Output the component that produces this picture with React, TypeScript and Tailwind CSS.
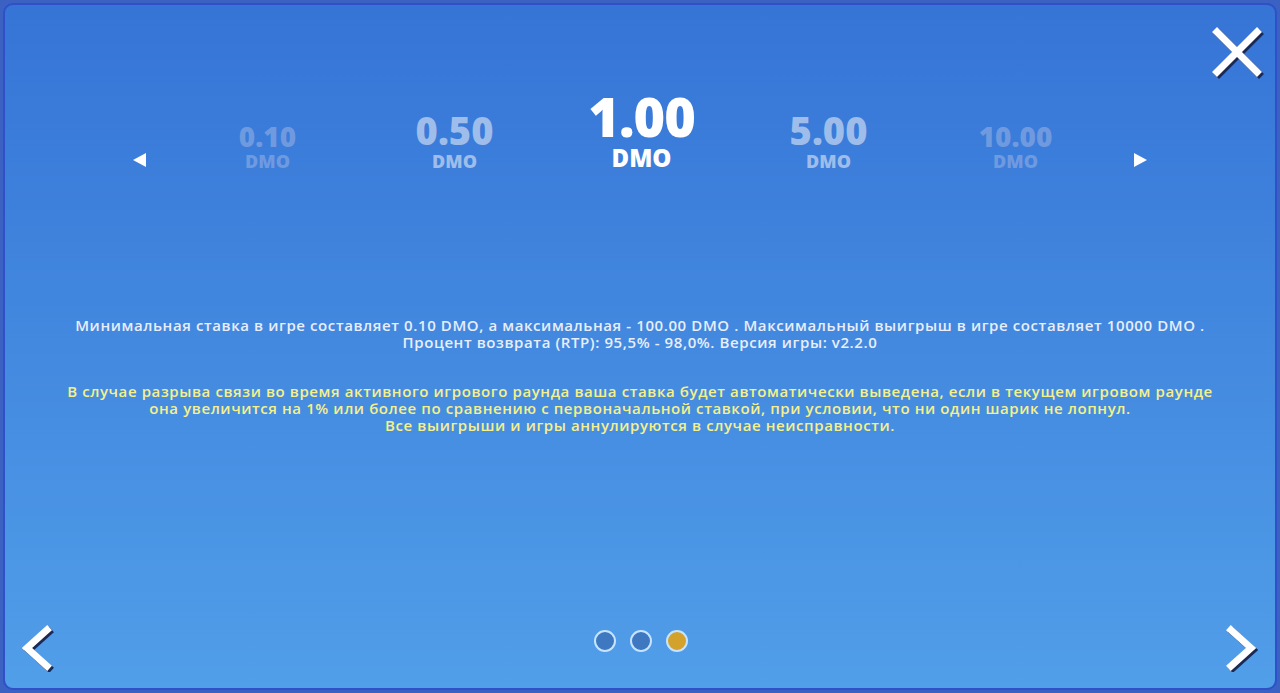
import { useState } from 'react'

const bets = ['0.10', '0.50', '1.00', '5.00', '10.00', '20.00', '50.00', '100.00']

function Chevron({ dir }: { dir: 'left' | 'right' }) {
  const d = dir === 'left' ? 'M30 6 L10 24 L30 42' : 'M10 6 L30 24 L10 42'
  return (
    <svg width="40" height="48" viewBox="0 0 40 48">
      <path d={d} transform="translate(2 2)" fill="none" stroke="#1b2a55" strokeWidth="7" strokeLinecap="square" />
      <path d={d} fill="none" stroke="#ffffff" strokeWidth="7" strokeLinecap="square" />
    </svg>
  )
}

function App() {
  const [active, setActive] = useState(2)
  const [page, setPage] = useState(2)

  const offsets = [-2, -1, 0, 1, 2]

  return (
    <div className="h-[693px] w-[1280px] overflow-hidden bg-[#3b62c3] p-[3px] font-['Open_Sans',sans-serif]">
      <div className="relative flex h-full flex-col rounded-[10px] border-2 border-[#2f50c6] bg-gradient-to-b from-[#3674d6] to-[#519ee9]">
        <button
          type="button"
          className="absolute right-[10px] top-[21px]"
          onClick={() => setPage(0)}
        >
          <svg width="54" height="54" viewBox="0 0 54 54">
            <g transform="translate(2 2)" stroke="#1b2a55" strokeWidth="7" strokeLinecap="square">
              <path d="M6 6 L46 46 M46 6 L6 46" />
            </g>
            <g stroke="#ffffff" strokeWidth="7" strokeLinecap="square">
              <path d="M6 6 L46 46 M46 6 L6 46" />
            </g>
          </svg>
        </button>

        <div className="mt-[84px] flex items-end justify-center">
          <button
            type="button"
            className="mb-[3px] mr-[28px] h-0 w-0 border-y-[7px] border-r-[13px] border-y-transparent border-r-white"
            onClick={() => setActive((a) => Math.max(0, a - 1))}
          />
          {offsets.map((o) => {
            const i = active + o
            const label = bets[i] ?? ''
            const dist = Math.abs(o)
            return (
              <div
                key={o}
                className={
                  'flex w-[187px] flex-col items-center font-extrabold leading-none ' +
                  (dist === 0
                    ? 'text-white'
                    : dist === 1
                      ? 'text-[#9ebdea]'
                      : 'text-[#6f9ae0]')
                }
              >
                <span
                  className={
                    dist === 0
                      ? 'text-[54px] tracking-[-1px]'
                      : dist === 1
                        ? 'text-[38px]'
                        : 'text-[28px]'
                  }
                >
                  {label}
                </span>
                <span
                  className={
                    dist === 0
                      ? 'mt-[3px] text-[24px]'
                      : dist === 1
                        ? 'mt-[3px] text-[18px]'
                        : 'mt-[2px] text-[18px]'
                  }
                >
                  {label ? 'DMO' : ''}
                </span>
              </div>
            )
          })}
          <button
            type="button"
            className="mb-[3px] ml-[25px] h-0 w-0 border-y-[7px] border-l-[13px] border-y-transparent border-l-white"
            onClick={() => setActive((a) => Math.min(bets.length - 1, a + 1))}
          />
        </div>

        <div className="mt-[147px] px-[40px] text-center text-[15px] font-semibold leading-[17px] tracking-[0.6px]">
          <p className="text-[#e8eef9]">
            Минимальная ставка в игре составляет 0.10 DMO, а максимальная - 100.00 DMO . Максимальный выигрыш в игре составляет 10000 DMO .
            <br />
            Процент возврата (RTP): 95,5% - 98,0%. Версия игры: v2.2.0
          </p>
          <p className="mt-[32px] text-[#f6f08a]">
            В случае разрыва связи во время активного игрового раунда ваша ставка будет автоматически выведена, если в текущем игровом раунде
            <br />
            она увеличится на 1% или более по сравнению с первоначальной ставкой, при условии, что ни один шарик не лопнул.
            <br />
            Все выигрыши и игры аннулируются в случае неисправности.
          </p>
        </div>

        <div className="mt-auto flex items-center justify-between pb-[16px] pl-[12px] pr-[14px]">
          <button type="button" onClick={() => setPage((p) => Math.max(0, p - 1))}>
            <Chevron dir="left" />
          </button>
          <div className="mb-[14px] ml-[4px] flex items-center gap-[14px]">
            {[0, 1, 2].map((i) => (
              <span
                key={i}
                className={
                  'h-[22px] w-[22px] rounded-full border-2 border-[#c6e4ff] ' +
                  (i === page ? 'bg-[#d2a22c]' : 'bg-[#3d78c0]')
                }
              />
            ))}
          </div>
          <button type="button" onClick={() => setPage((p) => Math.min(2, p + 1))}>
            <Chevron dir="right" />
          </button>
        </div>
      </div>
    </div>
  )
}

export default App
